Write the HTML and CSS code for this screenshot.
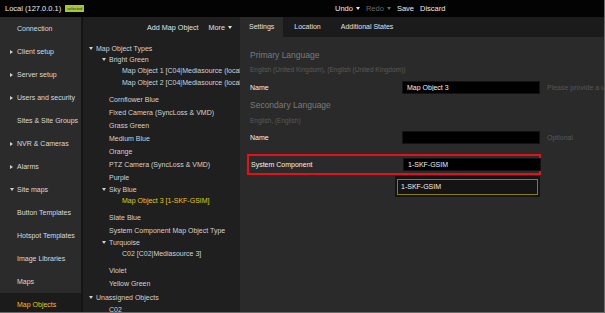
FILE: index.html
```html
<!DOCTYPE html>
<html lang="en">
<head>
	<meta charset="UTF-8">
	<title>Map Objects</title>
	<link rel="stylesheet" href="styles.css">
</head>
<body>

<div class="app">

	<!-- top bar -->
	<header class="topbar">
		<div class="host">Local (127.0.0.1) <span class="badge">selected</span></div>
		<div class="actions">
			<span class="action caret">Undo</span>
			<span class="action caret disabled">Redo</span>
			<span class="action">Save</span>
			<span class="action">Discard</span>
		</div>
	</header>

	<div class="main">

		<!-- left menu -->
		<nav class="sidebar">
			<a class="side-item">Connection</a>
			<a class="side-item closed">Client setup</a>
			<a class="side-item closed">Server setup</a>
			<a class="side-item closed">Users and security</a>
			<a class="side-item">Sites &amp; Site Groups</a>
			<a class="side-item closed">NVR &amp; Cameras</a>
			<a class="side-item closed">Alarms</a>
			<a class="side-item open">Site maps</a>
			<a class="side-item">Button Templates</a>
			<a class="side-item">Hotspot Templates</a>
			<a class="side-item">Image Libraries</a>
			<a class="side-item">Maps</a>
			<a class="side-item active">Map Objects</a>
		</nav>

		<!-- tree -->
		<section class="tree-panel">
			<div class="tree-toolbar">
				<span>Add Map Object</span>
				<span class="caret">More</span>
			</div>

			<div class="tree">
				<div class="group top">
					<div class="row l0 head">Map Object Types</div>
					<div class="group">
						<div class="row l1 head">Bright Green</div>
						<div class="row l2 child">Map Object 1 [C04|Mediasource (local)]</div>
						<div class="row l2 child">Map Object 2 [C04|Mediasource (local)]</div>
					</div>
					<div class="row l1 leaf">Cornflower Blue</div>
					<div class="row l1 leaf">Fixed Camera (SyncLoss &amp; VMD)</div>
					<div class="row l1 leaf">Grass Green</div>
					<div class="row l1 leaf">Medium Blue</div>
					<div class="row l1 leaf">Orange</div>
					<div class="row l1 leaf">PTZ Camera (SyncLoss &amp; VMD)</div>
					<div class="row l1 leaf">Purple</div>
					<div class="group">
						<div class="row l1 head">Sky Blue</div>
						<div class="row l2 child selected">Map Object 3 [1-SKF-GSIM]</div>
					</div>
					<div class="row l1 leaf">Slate Blue</div>
					<div class="row l1 leaf">System Component Map Object Type</div>
					<div class="group">
						<div class="row l1 head">Turquoise</div>
						<div class="row l2 child">C02 [C02|Mediasource 3]</div>
					</div>
					<div class="row l1 leaf">Violet</div>
					<div class="row l1 leaf">Yellow Green</div>
				</div>
				<div class="group top">
					<div class="row l0 head">Unassigned Objects</div>
					<div class="row l1 leaf">C02</div>
				</div>
			</div>
		</section>

		<!-- settings -->
		<section class="settings">
			<div class="tabs">
				<span class="tab active">Settings</span>
				<span class="tab">Location</span>
				<span class="tab">Additional States</span>
			</div>

			<div class="settings-body">
				<div class="section-title">Primary Language</div>
				<div class="section-sub">English (United Kingdom), (English (United Kingdom))</div>
				<div class="field">
					<label>Name</label>
					<input class="text-input" type="text" value="Map Object 3">
					<span class="hint">Please provide a unique name</span>
				</div>

				<div class="section-title gap">Secondary Language</div>
				<div class="section-sub">English, (English)</div>
				<div class="field">
					<label>Name</label>
					<input class="text-input" type="text" value="">
					<span class="hint">Optional</span>
				</div>

				<!-- highlighted row -->
				<div class="highlight">
					<div class="field">
						<label>System Component</label>
						<input class="text-input" type="text" value="1-SKF-GSIM">
					</div>
				</div>

				<div class="suggest">
					<div class="suggest-item">1-SKF-GSIM</div>
				</div>
			</div>
		</section>

	</div>
</div>

</body>
</html>
```

FILE: styles.css
```css
* {
    box-sizing: border-box;
}

body {
    margin: 0;
    background: #2a2a2a;
    font-family: "Liberation Sans", Arial, sans-serif;
    font-size: 7px;
    color: #d6d6d6;
}

.app {
    width: 605px;
    height: 313px;
    display: flex;
    flex-direction: column;
    border-right: 1px solid #6a6a6a;
    border-bottom: 1px solid #6a6a6a;
    overflow: hidden;
}

/* top bar */
.topbar {
    flex: none;
    height: 17px;
    background: #030303;
    display: flex;
    align-items: center;
    color: #ececec;
    font-size: 7.5px;
}

.host {
    width: 335px;
    padding-left: 5px;
    display: flex;
    align-items: center;
    gap: 4px;
}

.badge {
    background: #a3c63c;
    color: #20360a;
    font-size: 4px;
    line-height: 7px;
    padding: 0 2px;
}

.actions {
    display: flex;
    gap: 6px;
}

.action.disabled {
    color: #6a6a6a;
}

.caret::after {
    content: "";
    display: inline-block;
    margin-left: 3px;
    vertical-align: 1px;
    border-left: 2px solid transparent;
    border-right: 2px solid transparent;
    border-top: 3px solid currentColor;
}

.main {
    flex: 1;
    display: flex;
    min-height: 0;
}

/* left menu */
.sidebar {
    flex: none;
    width: 83px;
    background: #2b2b2b;
    border-right: 2px solid #141414;
    display: flex;
    flex-direction: column;
}

.side-item {
    flex: none;
    height: 23px;
    line-height: 23px;
    padding-left: 17px;
    white-space: nowrap;
    color: #dadada;
}

.side-item.closed::before {
    content: "";
    display: inline-block;
    margin-left: -7px;
    margin-right: 4px;
    vertical-align: 0;
    border-top: 2px solid transparent;
    border-bottom: 2px solid transparent;
    border-left: 3px solid #d0d0d0;
}

.side-item.open::before {
    content: "";
    display: inline-block;
    margin-left: -7px;
    margin-right: 3px;
    vertical-align: 1px;
    border-left: 2px solid transparent;
    border-right: 2px solid transparent;
    border-top: 3px solid #d0d0d0;
}

.side-item.active {
    background: #1b1b1b;
    color: #e8c31d;
}

/* tree */
.tree-panel {
    flex: none;
    width: 157px;
    background: #1f1f1f;
    display: flex;
    flex-direction: column;
    overflow: hidden;
}

.tree-toolbar {
    flex: none;
    height: 20px;
    display: flex;
    justify-content: flex-end;
    align-items: center;
    gap: 10px;
    padding-right: 8px;
    color: #e2e2e2;
    font-size: 7.2px;
}

.tree {
    padding-top: 5.5px;
    white-space: nowrap;
    color: #d2d2d2;
}

.group {
    margin-bottom: 4px;
}

.group.top {
    margin-bottom: 2px;
}

.row.head {
    height: 11px;
    line-height: 11px;
}

.row.child {
    height: 12px;
    line-height: 12px;
}

.row.leaf {
    height: 13px;
    line-height: 13px;
}

.row.l0 {
    padding-left: 13px;
}

.row.l1 {
    padding-left: 26px;
}

.row.l2 {
    padding-left: 39px;
}

.row.head::before {
    content: "";
    display: inline-block;
    margin-left: -7px;
    margin-right: 3px;
    vertical-align: 1px;
    border-left: 2px solid transparent;
    border-right: 2px solid transparent;
    border-top: 3px solid #d0d0d0;
}

.row.selected {
    color: #e8c31d;
}

/* settings */
.settings {
    flex: 1;
    min-width: 0;
    display: flex;
    flex-direction: column;
    background: #2a2a2a;
    overflow: hidden;
}

.tabs {
    flex: none;
    height: 20px;
    background: #1b1b1b;
    display: flex;
    gap: 2px;
}

.tab {
    padding: 0 9px;
    line-height: 20px;
    color: #e0e0e0;
}

.tab.active {
    background: #2a2a2a;
}

.settings-body {
    padding: 12px 0 0 10px;
    white-space: nowrap;
}

.section-title {
    font-size: 8.5px;
    line-height: 12px;
    color: #7a7a7a;
}

.section-title.gap {
    margin-top: 5px;
}

.section-sub {
    margin-top: 4px;
    font-size: 6.5px;
    line-height: 10px;
    color: #5a5a5a;
}

.section-title.gap + .section-sub {
    margin-top: 5px;
}

.field {
    display: grid;
    grid-template-columns: 145px 138px auto;
    column-gap: 7px;
    align-items: center;
    margin-top: 6px;
}

.section-title.gap ~ .field {
    margin-top: 5px;
}

.field label {
    color: #f2f2f2;
}

.text-input {
    height: 13px;
    margin: 0;
    padding: 0 0 0 4px;
    border: 1px solid #141414;
    background: #000;
    color: #f2f2f2;
    font-family: inherit;
    font-size: 7px;
    outline: none;
}

.hint {
    color: #575757;
}

.highlight {
    width: 294px;
    margin: 10px 0 0 -3px;
    padding: 2px;
    border: 2px solid #e3121a;
}

.highlight .field {
    margin-top: 0;
}

.suggest {
    width: 145px;
    height: 21px;
    margin: 1px 0 0 145px;
    padding: 3px 2px 2px;
    background: #141414;
}

.suggest-item {
    height: 16px;
    line-height: 14px;
    padding-left: 3px;
    border: 1px solid #8c7b15;
    color: #f2f2f2;
}
```
